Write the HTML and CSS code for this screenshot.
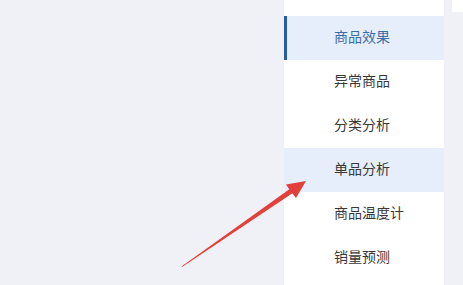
FILE: index.html
```html
<!DOCTYPE html>
<html lang="zh-CN">
<head>
    <meta charset="UTF-8">
    <meta name="viewport" content="width=device-width, initial-scale=1.0">
    <title>商品分析</title>
    <link rel="stylesheet" href="styles.css">
</head>
<body>
    <div class="page">
        <div class="main"></div>
        <ul class="menu">
            <li class="active">商品效果</li>
            <li>异常商品</li>
            <li>分类分析</li>
            <li class="hover">单品分析</li>
            <li>商品温度计</li>
            <li>销量预测</li>
        </ul>
        <div class="side">
            <div class="side_card"></div>
        </div>
    </div>
    <svg class="arrow" width="463" height="285" viewBox="0 0 463 285">
        <polygon points="181.5,266.5 289.7,189.1 292.5,193.3 182.5,266.8" fill="#e2403b"/>
        <polygon points="306,181 286,184.6 290.6,191.3 296,198" fill="#e2403b"/>
    </svg>
</body>
</html>
```

FILE: styles.css
```css
body {
    margin: 0;
    background: #f0f1f6;
    font-family: "Noto Sans CJK SC", "Noto Sans", sans-serif;
}

.page {
    display: flex;
    height: 285px;
    overflow: hidden;
}

.main {
    flex: 1;
}

.menu {
    width: 160px;
    margin: 0;
    padding: 16px 0 0;
    list-style: none;
    background: #fff;
}
.menu li {
    height: 44px;
    line-height: 41px;
    padding-left: 50px;
    font-size: 14px;
    color: #383838;
}
.menu li.active {
    background: #e6eefb;
    color: #3a6ca8;
    border-left: 3px solid #2a5ca6;
    padding-left: 47px;
}
.menu li.hover {
    background: #e6eefb;
}

.side {
    width: 19px;
    padding-left: 8px;
    box-sizing: border-box;
}
.side_card {
    height: 12px;
    background: #fff;
}

.arrow {
    position: absolute;
    left: 0;
    top: 0;
}
```
